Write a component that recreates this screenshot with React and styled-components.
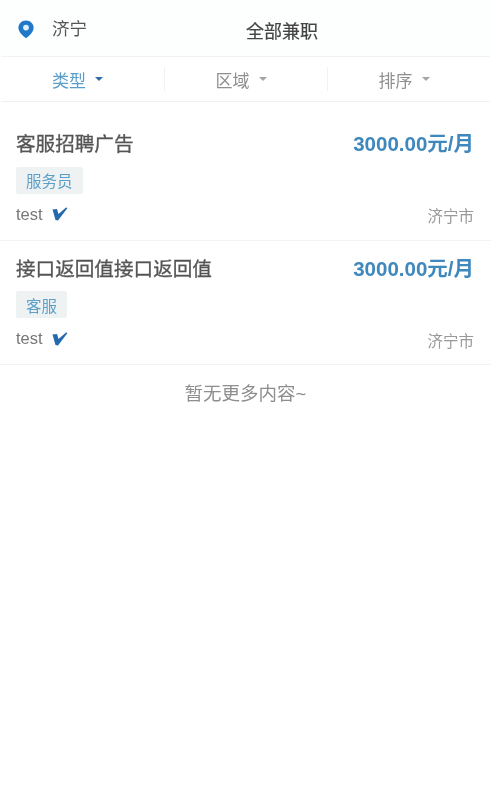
import React from "react";
import styled, { createGlobalStyle } from "styled-components";

const Global = createGlobalStyle`
  html, body { margin: 0; padding: 0; background: #fff; }
  body { font-family: "Liberation Sans", "Noto Sans CJK SC", sans-serif; }
`;
const Page = styled.div`width: 491px; height: 791px; background: #fff; overflow: hidden; filter: blur(0.7px);`;
const Header = styled.header`
  height: 56px; display: grid; grid-template-columns: 229px auto; align-items: center;
  padding: 0 0 0 17px; box-sizing: border-box; background: #fdfefe;
`;
const City = styled.div`display: flex; align-items: center; gap: 17px; font-size: 17.5px; color: #555; margin-top: -1px;`;
const PinSlot = styled.span`display: flex; margin-top: 3px;`;
const Title = styled.h1`margin: 3px 0 0; font-size: 18px; font-weight: 400; color: #444; -webkit-text-stroke: 0.2px #444;`;
const Tabs = styled.nav`
  height: 46px; display: grid; grid-template-columns: repeat(3, 1fr); align-items: center;
  border-top: 1px solid #f1f2f3; border-bottom: 1px solid #eef0f1; box-sizing: border-box;
  margin: 0 1px;
`;
const Tab = styled.div`
  display: flex; align-items: center; justify-content: center; gap: 9px; height: 24px; padding-right: 10px;
  font-size: 17px; color: ${p => p.$active ? "#5b9ecb" : "#8f8f8f"};
  & + & { border-left: 1px solid #f1f2f3; }
`;
const Caret = styled.span`
  width: 0; height: 0; border-left: 4.5px solid transparent; border-right: 4.5px solid transparent;
  border-top: 4px solid ${p => p.$active ? "#2f6fa8" : "#a5a5a5"};
`;
const List = styled.main`padding-top: 14px;`;
const Job = styled.article`
  height: 124.5px; box-sizing: border-box; padding: 15px 17px 0 16px; border-bottom: 1px solid #f2f3f4;
  display: flex; flex-direction: column;
`;
const Row = styled.div`display: flex; justify-content: space-between; align-items: ${p => p.$end ? "flex-end" : "center"};`;
const JobTitle = styled.h2`margin: 0; font-size: 19.6px; font-weight: 400; color: #555; line-height: 26px; -webkit-text-stroke: 0.3px #555;`;
const Salary = styled.div`font-size: 20.5px; font-weight: 700; color: #3f88bd; line-height: 26px; white-space: nowrap;`;
const Tag = styled.span`
  align-self: flex-start; margin-top: 9.5px; height: 27px; padding: 0 10px; background: #eff2f3;
  display: flex; align-items: center; font-size: 15.5px; color: #5c9fc8; border-radius: 2px;
`;
const Poster = styled.div`display: flex; align-items: center; gap: 9px; font-size: 16.5px; color: #777; margin-bottom: -3.5px;`;
const Place = styled.div`font-size: 15.5px; color: #999; margin-bottom: -6px;`;
const Meta = styled(Row)`margin-top: 4.5px; height: 22px;`;
const Footer = styled.div`text-align: center; margin-top: 14px; font-size: 18.5px; color: #8e8e8e;`;

const Pin = () => (
  <svg width="18" height="19" viewBox="0 0 18 20">
    <path d="M9 0.5C4.3 0.5 1 3.9 1 8.2c0 4.4 4.6 8.6 8 11 3.4-2.4 8-6.6 8-11C17 3.9 13.7.5 9 .5z" fill="#1f78c8" />
    <circle cx="9" cy="8" r="3" fill="#dff0fb" />
  </svg>
);
const Verified = () => (
  <svg width="16" height="14" viewBox="0 0 16 14">
    <path d="M0.5 2.5 5 2 6.5 7 14 0.5 15.5 1 6 13.5 3.5 13z" fill="#2469ad" />
  </svg>
);

const jobs = [
  { title: "客服招聘广告", tag: "服务员" },
  { title: "接口返回值接口返回值", tag: "客服" },
];

export default function App() {
  return (
    <Page>
      <Global />
      <Header>
        <City><PinSlot><Pin /></PinSlot>济宁</City>
        <Title>全部兼职</Title>
      </Header>
      <Tabs>
        <Tab $active>类型<Caret $active /></Tab>
        <Tab>区域<Caret /></Tab>
        <Tab>排序<Caret /></Tab>
      </Tabs>
      <List>
        {jobs.map(j => (
          <Job key={j.title}>
            <Row>
              <JobTitle>{j.title}</JobTitle>
              <Salary>3000.00元/月</Salary>
            </Row>
            <Tag>{j.tag}</Tag>
            <Meta $end>
              <Poster>test <Verified /></Poster>
              <Place>济宁市</Place>
            </Meta>
          </Job>
        ))}
      </List>
      <Footer>暂无更多内容~</Footer>
    </Page>
  );
}
